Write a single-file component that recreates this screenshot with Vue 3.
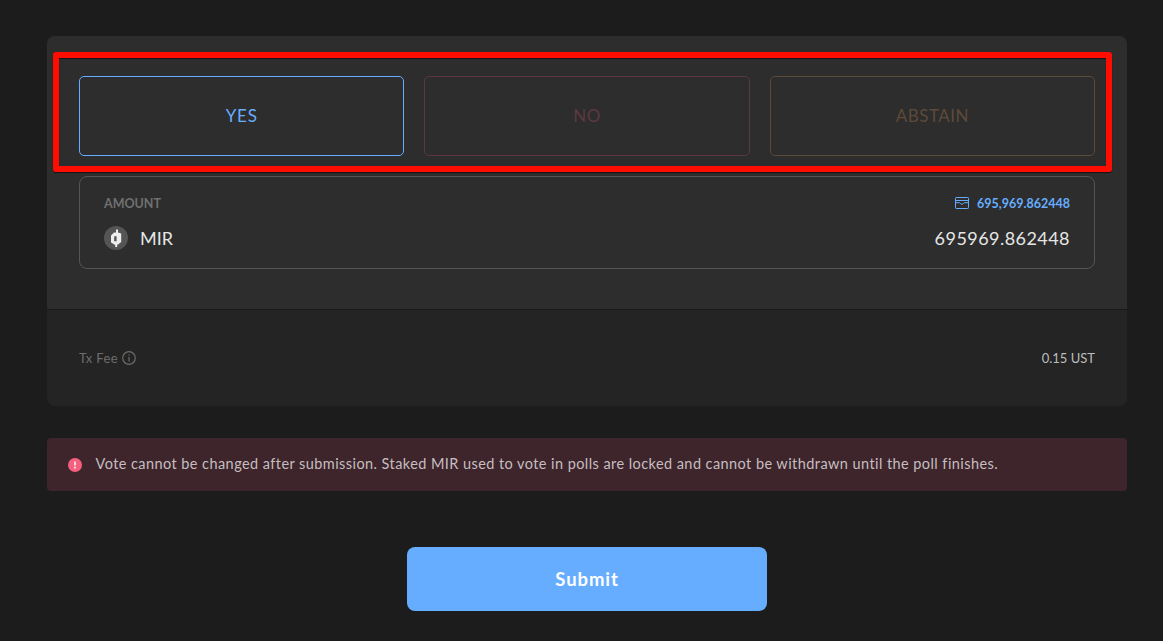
<script setup>
const options = [
  { key: 'yes', label: 'YES' },
  { key: 'no', label: 'NO' },
  { key: 'abstain', label: 'ABSTAIN' },
]
</script>

<template>
  <main class="page">
    <section class="card">
      <div class="upper">
        <div class="options">
          <button v-for="o in options" :key="o.key" class="option" :class="o.key"><span>{{ o.label }}</span></button>
          <div class="highlight"></div>
        </div>
        <div class="amount">
          <div class="row head">
            <span class="label">AMOUNT</span>
            <span class="balance">
              <svg width="14" height="12" viewBox="0 0 14 12" fill="none" stroke="currentColor">
                <rect x=".5" y=".5" width="13" height="11" rx=".8" />
                <path d="M.5 3.5h13M.5 5.7h4.200c.4 0 .6 1.500 2.300 1.500s1.900-1.500 2.300-1.500h4.200" />
              </svg>
              <span class="balance-value">695,969.862448</span>
            </span>
          </div>
          <div class="row main">
            <span class="token">
              <svg width="24" height="24" viewBox="0 0 24 24">
                <circle cx="12" cy="12" r="12" fill="#555" />
                <path fill="#eee" fill-rule="evenodd" d="M12 3.500h2v3l3.200 1v8.500l-3 2.500h-1v2.500h-2v-2l-4.200-2.500v-7l3-3h2zM10.200 10.200v5h2.400v-5z" />
              </svg>
              <span class="mir">MIR</span>
            </span>
            <span class="value">695969.862448</span>
          </div>
        </div>
      </div>
      <div class="lower">
        <span class="fee">
          <span class="fee-label">Tx Fee</span>
          <svg width="14" height="14" viewBox="0 0 14 14" fill="none" stroke="currentColor">
            <circle cx="7" cy="7" r="6.300" stroke-width="1.200" />
            <path d="M7 6v4.500M7 3.500v1.300" stroke-width="1.200" />
          </svg>
        </span>
        <span class="fee-value">0.15 UST</span>
      </div>
    </section>
    <section class="warning">
      <svg width="14" height="14" viewBox="0 0 14 14">
        <circle cx="7" cy="7" r="7" fill="#f5607e" />
        <path d="M7 3.400v4.200M7 8.800v1.600" stroke="#fff" stroke-width="1.500" />
      </svg>
      <span class="message">Vote cannot be changed after submission. Staked MIR used to vote in polls are locked and cannot be withdrawn until the poll finishes.</span>
    </section>
    <button class="submit"><span>Submit</span></button>
  </main>
</template>

<style>
body { background: #1c1c1c; }
</style>

<style scoped>
.page {
  box-sizing: border-box;
  width: 1163px;
  height: 641px;
  padding: 36px 36px 0 47px;
  display: flex;
  flex-direction: column;
  background: #1c1c1c;
  color: #e6e6e6;
  font-family: Lato, "Open Sans", sans-serif;
  white-space: nowrap;
  overflow: hidden;
}
button { font: inherit; padding: 0; border: 0; background: none; }
.card { height: 370px; border-radius: 8px; overflow: hidden; background: #242424; }
.upper {
  box-sizing: border-box;
  height: 274px;
  padding: 40px 32px 0;
  background: #2d2d2d;
  border-bottom: 1px solid #1a1a1a;
}
.options { position: relative; display: grid; grid-template-columns: repeat(3, 1fr); gap: 20px; }
.option { box-sizing: border-box; height: 80px; padding-bottom: 1px; border: 1px solid; border-radius: 5px; font-size: 17px; letter-spacing: .5px; }
.yes { color: #66adff; letter-spacing: .8px; }
.no { color: #5d3843; }
.abstain { color: #5d4a38; }
.highlight {
  position: absolute;
  box-sizing: border-box;
  inset: -24px -17px -16px -26px;
  border: 6px solid #ff0d00;
  border-radius: 3px;
  box-shadow: 0 1px 1px #141414, inset 0 1px 1px #141414;
  pointer-events: none;
}
.amount {
  box-sizing: border-box;
  height: 93px;
  margin-top: 20px;
  padding: 18px 24px 0;
  border: 1px solid #555;
  border-radius: 8px;
}
.row { display: flex; justify-content: space-between; align-items: center; }
.head { height: 16px; font-size: 12.5px; font-weight: 700; }
.label { color: #707070; letter-spacing: 0; }
.balance { display: flex; align-items: center; gap: 8px; color: #66adff; }
.balance-value { letter-spacing: 0; }
.main { height: 24px; margin-top: 15px; font-size: 18px; }
.token { display: flex; align-items: center; gap: 12px; }
.value { letter-spacing: .45px; }
.lower { height: 96px; padding: 0 32px; display: flex; align-items: center; justify-content: space-between; font-size: 13px; }
.fee { display: flex; align-items: center; gap: 4px; color: #6c6c6c; }
.fee-label { padding-bottom: 1px; letter-spacing: .35px; }
.fee-value { padding-bottom: 1px; color: #bdbdbd; letter-spacing: 0; }
.warning {
  box-sizing: border-box;
  height: 53px;
  margin-top: 32px;
  padding-left: 21px;
  display: flex;
  align-items: center;
  gap: 13.5px;
  border-radius: 4px;
  background: #3d252b;
  color: #c6bec0;
  font-size: 14.5px;
}
.message { padding-bottom: 2px; letter-spacing: .43px; }
.submit {
  width: 360px;
  height: 64px;
  margin-top: 56px;
  padding-bottom: 1px;
  align-self: center;
  border-radius: 8px;
  background: #66adff;
  color: #fff;
  font-size: 18.5px;
  font-weight: 700;
  letter-spacing: .9px;
}
</style>
